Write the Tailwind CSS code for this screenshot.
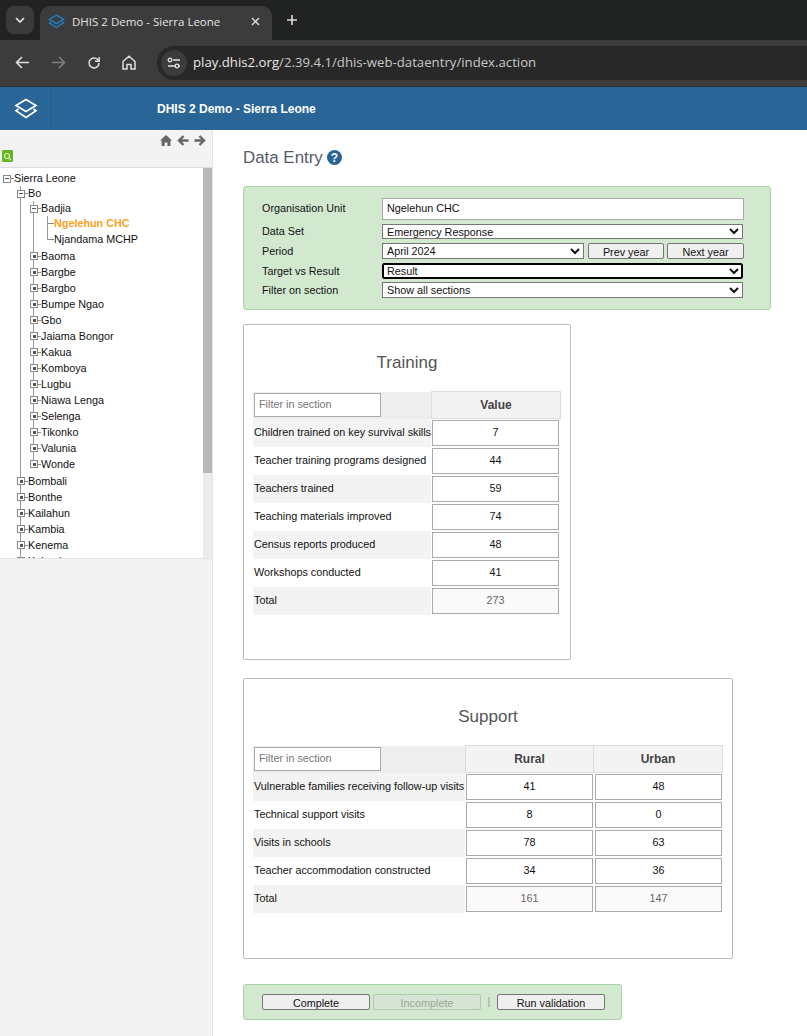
<!DOCTYPE html>
<html lang="en">
<head>
  <meta charset="UTF-8">
  <title>DHIS 2 Demo - Sierra Leone</title>
  <script src="https://cdn.jsdelivr.net/npm/@tailwindcss/browser@4"></script>
</head>
<body class="h-[1036px] w-[807px] overflow-hidden bg-white font-['Liberation_Sans',sans-serif] text-[10.8px] text-[#111]">
  <!-- Browser tab strip -->
  <div class="flex h-[40px] items-start bg-[#212322] pl-[6px] pt-[6px] font-['Open_Sans',sans-serif]">
    <div class="flex h-[28px] w-[28px] items-center justify-center rounded-[8px] bg-[#3a3a3a]">
      <svg width="10" height="6" viewBox="0 0 10 6" fill="none" stroke="#e6e6e6" stroke-width="1.7"><path d="M1 1l4 4 4-4"/></svg>
    </div>
    <div class="ml-[6px] flex h-[34px] w-[232px] items-center rounded-t-[10px] bg-[#3c3c3c] pb-[3px] pl-[8px] pr-[12px]">
      <svg width="17" height="15" viewBox="0 0 24 21" fill="none" stroke="#1f7fc4" stroke-width="2"><path d="M12 1.5L22 7.5 12 13.5 2 7.5z"/><path d="M4 11L2 12.5 12 19 22 12.5 20 11"/></svg>
      <span class="ml-[7px] text-[11.5px] whitespace-nowrap text-[#e3e3e3]">DHIS 2 Demo - Sierra Leone</span>
      <svg class="ml-auto" width="9" height="9" viewBox="0 0 9 9" stroke="#dcdcdc" stroke-width="1.4"><path d="M1 1l7 7M8 1L1 8"/></svg>
    </div>
    <svg class="ml-[14px] mt-[8px]" width="12" height="12" viewBox="0 0 12 12" stroke="#dcdcdc" stroke-width="1.6"><path d="M6 1v10M1 6h10"/></svg>
  </div>

  <!-- Browser toolbar -->
  <div class="flex h-[47px] items-center border-b border-[#2e3133] bg-[#3c3c3c] pb-[1px] font-['Open_Sans',sans-serif]">
    <div class="flex w-[157px] items-center pl-[15px]">
      <svg width="15" height="13" viewBox="0 0 15 13" fill="none" stroke="#dedede" stroke-width="1.6"><path d="M14 6.5H2M7 1L1.5 6.5 7 12"/></svg>
      <svg class="ml-[21px]" width="15" height="13" viewBox="0 0 15 13" fill="none" stroke="#808080" stroke-width="1.6"><path d="M1 6.5h12M8 1l5.5 5.5L8 12"/></svg>
      <svg class="ml-[21px]" width="14" height="14" viewBox="0 0 14 14" fill="none" stroke="#dedede" stroke-width="1.5"><path d="M12 7a5 5 0 1 1-1.5-3.6L12 5"/><path d="M12.2 1v4.2H8" /></svg>
      <svg class="ml-[21px]" width="14" height="15" viewBox="0 0 14 15" fill="none" stroke="#dedede" stroke-width="1.5"><path d="M1 6.5L7 1.2l6 5.3V14H9V9.5H5V14H1z"/></svg>
    </div>
    <div class="flex h-[34px] flex-1 items-center rounded-l-[17px] bg-[#282828] pl-[4px]">
      <div class="flex h-[26px] w-[26px] items-center justify-center rounded-full bg-[#3c3c3c]">
        <svg width="14" height="12" viewBox="0 0 14 12" fill="none" stroke="#e3e3e3" stroke-width="1.3"><path d="M6 3h7M1 9h7M11 9h2"/><circle cx="3" cy="3" r="1.8"/><circle cx="10" cy="9" r="1.8"/></svg>
      </div>
      <span class="ml-[6px] pt-[1px] text-[13.2px] whitespace-nowrap text-[#c7c7c7]"><span class="text-[#e8e8e8]">play.dhis2.org</span>/2.39.4.1/dhis-web-dataentry/index.action</span>
    </div>
  </div>

  <!-- DHIS2 header -->
  <header class="flex h-[43px] items-center bg-[#296596]">
    <div class="flex h-full w-[52px] items-center justify-center border-r border-[#245a86]">
      <svg width="24" height="21" viewBox="0 0 24 21" fill="none" stroke="#fff" stroke-width="1.7"><path d="M12 1.5L22 7.5 12 13.5 2 7.5z"/><path d="M4.5 11L2 12.8 12 19.5 22 12.8 19.5 11"/></svg>
    </div>
    <h1 class="ml-[105px] text-[12px] font-bold text-white">DHIS 2 Demo - Sierra Leone</h1>
  </header>

  <div class="flex h-[906px]">
    <!-- Organisation unit tree -->
    <aside class="flex h-full w-[213px] shrink-0 flex-col border-r border-[#e4e4e4] bg-[#f3f3f3]">
      <div class="h-[38px] shrink-0 border-b border-[#ddd]">
        <div class="flex h-[20px] items-center justify-end gap-[5px] pr-[6px]">
          <svg width="12" height="11" viewBox="0 0 12 11" fill="#666"><path d="M6 0L0 5.5h1.6V11h3V7.5h2.8V11h3V5.5H12z"/></svg>
          <svg width="12" height="11" viewBox="0 0 12 11" fill="none" stroke="#666" stroke-width="2.4"><path d="M11.5 5.5H2M6.5 1L2 5.5 6.5 10"/></svg>
          <svg width="12" height="11" viewBox="0 0 12 11" fill="none" stroke="#666" stroke-width="2.4"><path d="M.5 5.5H10M5.5 1L10 5.5 5.5 10"/></svg>
        </div>
        <div class="ml-[2px] flex h-[12px] w-[11px] items-center justify-center rounded-[1px] bg-[#66b61f]">
          <svg width="9" height="9" viewBox="0 0 9 9" fill="none" stroke="#d8f0b8" stroke-width="1.2"><circle cx="4" cy="4" r="2.5"/><path d="M6 6L8 8"/></svg>
        </div>
      </div>
      <div class="flex h-[390px] shrink-0 bg-white">
        <div class="h-full flex-1 overflow-hidden pt-[3px] leading-none">
          <div class="flex h-[15px] items-center pl-[3px]">
            <i class="flex h-[8px] w-[8px] shrink-0 items-center justify-center border border-[#888] bg-white"><b class="h-px w-[4px] bg-[#555]"></b></i><i class="h-px w-[3px] bg-[#888]"></i><span>Sierra Leone</span>
          </div>
          <ul class="ml-[20px] border-l border-[#999]">
            <li class="flex h-[15px] items-center">
              <i class="-ml-[4px] flex h-[8px] w-[8px] shrink-0 items-center justify-center border border-[#888] bg-white"><b class="h-px w-[4px] bg-[#555]"></b></i><i class="h-px w-[3px] bg-[#888]"></i><span>Bo</span>
            </li>
            <li>
              <ul class="mb-[8px] ml-[12px] h-[264px] border-l border-[#999]">
                <li class="flex h-[15px] items-center">
                  <i class="-ml-[4px] flex h-[8px] w-[8px] shrink-0 items-center justify-center border border-[#888] bg-white"><b class="h-px w-[4px] bg-[#555]"></b></i><i class="h-px w-[3px] bg-[#888]"></i><span>Badjia</span>
                </li>
                <li>
                  <ul class="mb-[8px] ml-[13px] h-[24px] border-l border-[#999]">
                    <li class="flex h-[15px] items-center"><i class="h-px w-[6px] bg-[#888]"></i><span class="font-bold text-[#ff9f1c]">Ngelehun CHC</span></li>
                    <li class="flex h-[16px] items-center"><i class="h-px w-[6px] bg-[#888]"></i><span>Njandama MCHP</span></li>
                  </ul>
                </li>
                <li class="flex h-[16px] items-center"><i class="-ml-[4px] flex h-[8px] w-[8px] shrink-0 items-center justify-center border border-[#888] bg-white"><b class="h-[3px] w-[3px] bg-[#555]"></b></i><i class="h-px w-[3px] bg-[#888]"></i><span>Baoma</span></li>
                <li class="flex h-[16px] items-center"><i class="-ml-[4px] flex h-[8px] w-[8px] shrink-0 items-center justify-center border border-[#888] bg-white"><b class="h-[3px] w-[3px] bg-[#555]"></b></i><i class="h-px w-[3px] bg-[#888]"></i><span>Bargbe</span></li>
                <li class="flex h-[16px] items-center"><i class="-ml-[4px] flex h-[8px] w-[8px] shrink-0 items-center justify-center border border-[#888] bg-white"><b class="h-[3px] w-[3px] bg-[#555]"></b></i><i class="h-px w-[3px] bg-[#888]"></i><span>Bargbo</span></li>
                <li class="flex h-[16px] items-center"><i class="-ml-[4px] flex h-[8px] w-[8px] shrink-0 items-center justify-center border border-[#888] bg-white"><b class="h-[3px] w-[3px] bg-[#555]"></b></i><i class="h-px w-[3px] bg-[#888]"></i><span>Bumpe Ngao</span></li>
                <li class="flex h-[16px] items-center"><i class="-ml-[4px] flex h-[8px] w-[8px] shrink-0 items-center justify-center border border-[#888] bg-white"><b class="h-[3px] w-[3px] bg-[#555]"></b></i><i class="h-px w-[3px] bg-[#888]"></i><span>Gbo</span></li>
                <li class="flex h-[16px] items-center"><i class="-ml-[4px] flex h-[8px] w-[8px] shrink-0 items-center justify-center border border-[#888] bg-white"><b class="h-[3px] w-[3px] bg-[#555]"></b></i><i class="h-px w-[3px] bg-[#888]"></i><span>Jaiama Bongor</span></li>
                <li class="flex h-[16px] items-center"><i class="-ml-[4px] flex h-[8px] w-[8px] shrink-0 items-center justify-center border border-[#888] bg-white"><b class="h-[3px] w-[3px] bg-[#555]"></b></i><i class="h-px w-[3px] bg-[#888]"></i><span>Kakua</span></li>
                <li class="flex h-[16px] items-center"><i class="-ml-[4px] flex h-[8px] w-[8px] shrink-0 items-center justify-center border border-[#888] bg-white"><b class="h-[3px] w-[3px] bg-[#555]"></b></i><i class="h-px w-[3px] bg-[#888]"></i><span>Komboya</span></li>
                <li class="flex h-[16px] items-center"><i class="-ml-[4px] flex h-[8px] w-[8px] shrink-0 items-center justify-center border border-[#888] bg-white"><b class="h-[3px] w-[3px] bg-[#555]"></b></i><i class="h-px w-[3px] bg-[#888]"></i><span>Lugbu</span></li>
                <li class="flex h-[16px] items-center"><i class="-ml-[4px] flex h-[8px] w-[8px] shrink-0 items-center justify-center border border-[#888] bg-white"><b class="h-[3px] w-[3px] bg-[#555]"></b></i><i class="h-px w-[3px] bg-[#888]"></i><span>Niawa Lenga</span></li>
                <li class="flex h-[16px] items-center"><i class="-ml-[4px] flex h-[8px] w-[8px] shrink-0 items-center justify-center border border-[#888] bg-white"><b class="h-[3px] w-[3px] bg-[#555]"></b></i><i class="h-px w-[3px] bg-[#888]"></i><span>Selenga</span></li>
                <li class="flex h-[16px] items-center"><i class="-ml-[4px] flex h-[8px] w-[8px] shrink-0 items-center justify-center border border-[#888] bg-white"><b class="h-[3px] w-[3px] bg-[#555]"></b></i><i class="h-px w-[3px] bg-[#888]"></i><span>Tikonko</span></li>
                <li class="flex h-[16px] items-center"><i class="-ml-[4px] flex h-[8px] w-[8px] shrink-0 items-center justify-center border border-[#888] bg-white"><b class="h-[3px] w-[3px] bg-[#555]"></b></i><i class="h-px w-[3px] bg-[#888]"></i><span>Valunia</span></li>
                <li class="flex h-[16px] items-center"><i class="-ml-[4px] flex h-[8px] w-[8px] shrink-0 items-center justify-center border border-[#888] bg-white"><b class="h-[3px] w-[3px] bg-[#555]"></b></i><i class="h-px w-[3px] bg-[#888]"></i><span>Wonde</span></li>
              </ul>
            </li>
            <li class="flex h-[16px] items-center"><i class="-ml-[4px] flex h-[8px] w-[8px] shrink-0 items-center justify-center border border-[#888] bg-white"><b class="h-[3px] w-[3px] bg-[#555]"></b></i><i class="h-px w-[3px] bg-[#888]"></i><span>Bombali</span></li>
            <li class="flex h-[16px] items-center"><i class="-ml-[4px] flex h-[8px] w-[8px] shrink-0 items-center justify-center border border-[#888] bg-white"><b class="h-[3px] w-[3px] bg-[#555]"></b></i><i class="h-px w-[3px] bg-[#888]"></i><span>Bonthe</span></li>
            <li class="flex h-[16px] items-center"><i class="-ml-[4px] flex h-[8px] w-[8px] shrink-0 items-center justify-center border border-[#888] bg-white"><b class="h-[3px] w-[3px] bg-[#555]"></b></i><i class="h-px w-[3px] bg-[#888]"></i><span>Kailahun</span></li>
            <li class="flex h-[16px] items-center"><i class="-ml-[4px] flex h-[8px] w-[8px] shrink-0 items-center justify-center border border-[#888] bg-white"><b class="h-[3px] w-[3px] bg-[#555]"></b></i><i class="h-px w-[3px] bg-[#888]"></i><span>Kambia</span></li>
            <li class="flex h-[16px] items-center"><i class="-ml-[4px] flex h-[8px] w-[8px] shrink-0 items-center justify-center border border-[#888] bg-white"><b class="h-[3px] w-[3px] bg-[#555]"></b></i><i class="h-px w-[3px] bg-[#888]"></i><span>Kenema</span></li>
            <li class="flex h-[16px] items-center"><i class="-ml-[4px] flex h-[8px] w-[8px] shrink-0 items-center justify-center border border-[#888] bg-white"><b class="h-[3px] w-[3px] bg-[#555]"></b></i><i class="h-px w-[3px] bg-[#888]"></i><span>Koinadugu</span></li>
          </ul>
        </div>
        <div class="h-full w-[9px] shrink-0 bg-[#ececec]"><div class="h-[305px] bg-[#b9b9b9]"></div></div>
      </div>
      <div class="flex-1 border-t border-[#e4e4e4]"></div>
    </aside>

    <!-- Data entry form -->
    <main class="flex-1 pl-[30px]">
      <div class="flex h-[56px] items-center">
        <h2 class="text-[16.9px] text-[#555b66]">Data Entry</h2>
        <span class="mb-[1px] ml-[4px] flex h-[15px] w-[15px] items-center justify-center rounded-full bg-[#286596] text-[12px] font-bold text-white">?</span>
      </div>

      <form class="h-[124px] w-[528px] rounded-[3px] border border-[#a9d4a5] bg-[#d2e9cf] pl-[18px] pt-[11px]">
        <div class="flex h-[22px] items-center">
          <label class="w-[120px] pb-[2px]">Organisation Unit</label>
          <input class="h-[22px] w-[362px] border border-[#aaa] bg-white px-[4px] pb-[2px]" value="Ngelehun CHC">
        </div>
        <div class="mt-[4px] flex h-[15px] items-center">
          <label class="w-[120px]">Data Set</label>
          <select class="h-[15px] w-[361px] border border-[#767676] bg-white"><option>Emergency Response</option></select>
        </div>
        <div class="mt-[4px] flex h-[16px] items-center">
          <label class="w-[120px]">Period</label>
          <select class="h-[16px] w-[202px] border border-[#767676] bg-white"><option>April 2024</option></select>
          <button type="button" class="ml-[4px] h-[16px] w-[76px] rounded-[2px] border border-[#767676] bg-[#efefef] pb-[2px]">Prev year</button>
          <button type="button" class="ml-[3px] h-[16px] w-[77px] rounded-[2px] border border-[#767676] bg-[#efefef] pb-[2px]">Next year</button>
        </div>
        <div class="mt-[4px] flex h-[16px] items-center">
          <label class="w-[120px]">Target vs Result</label>
          <select class="h-[16px] w-[361px] rounded-[2px] border border-black bg-white shadow-[inset_0_0_0_1px_#000]"><option>Result</option></select>
        </div>
        <div class="mt-[3px] flex h-[16px] items-center">
          <label class="w-[120px]">Filter on section</label>
          <select class="h-[16px] w-[361px] border border-[#767676] bg-white"><option>Show all sections</option></select>
        </div>
      </form>

      <!-- Training -->
      <section class="mt-[14px] h-[336px] w-[328px] rounded-[2px] border border-[#bbb] pl-[9px]">
        <h3 class="flex h-[66px] items-end justify-center pb-[16px] pr-[9px] text-[17px] text-[#555]">Training</h3>
        <table class="w-[307px] table-fixed border-collapse">
          <colgroup><col class="w-[178px]"><col class="w-[129px]"></colgroup>
          <tr class="h-[27px]">
            <td class="bg-[#eee] pl-[1px]"><input class="block h-[24px] w-[127px] border border-[#aaa] bg-white px-[4px] pb-[3px] placeholder:text-[#777]" placeholder="Filter in section"></td>
            <th class="border border-[#ddd] bg-[#f3f3f3] pl-[1px] text-[12px] font-bold text-[#444]">Value</th>
          </tr>
          <tr class="h-[28px] bg-[#f3f3f3]"><td class="whitespace-nowrap pb-[1px] pl-[1px]">Children trained on key survival skills</td><td class="bg-white pl-[1px]"><input class="block h-[26px] w-[127px] border border-[#aaa] bg-white pb-[2px] text-center" value="7"></td></tr>
          <tr class="h-[28px]"><td class="whitespace-nowrap pb-[1px] pl-[1px]">Teacher training programs designed</td><td class="bg-white pl-[1px]"><input class="block h-[26px] w-[127px] border border-[#aaa] bg-white pb-[2px] text-center" value="44"></td></tr>
          <tr class="h-[28px] bg-[#f3f3f3]"><td class="whitespace-nowrap pb-[1px] pl-[1px]">Teachers trained</td><td class="bg-white pl-[1px]"><input class="block h-[26px] w-[127px] border border-[#aaa] bg-white pb-[2px] text-center" value="59"></td></tr>
          <tr class="h-[28px]"><td class="whitespace-nowrap pb-[1px] pl-[1px]">Teaching materials improved</td><td class="bg-white pl-[1px]"><input class="block h-[26px] w-[127px] border border-[#aaa] bg-white pb-[2px] text-center" value="74"></td></tr>
          <tr class="h-[28px] bg-[#f3f3f3]"><td class="whitespace-nowrap pb-[1px] pl-[1px]">Census reports produced</td><td class="bg-white pl-[1px]"><input class="block h-[26px] w-[127px] border border-[#aaa] bg-white pb-[2px] text-center" value="48"></td></tr>
          <tr class="h-[28px]"><td class="whitespace-nowrap pb-[1px] pl-[1px]">Workshops conducted</td><td class="bg-white pl-[1px]"><input class="block h-[26px] w-[127px] border border-[#aaa] bg-white pb-[2px] text-center" value="41"></td></tr>
          <tr class="h-[28px] bg-[#f3f3f3]"><td class="whitespace-nowrap pb-[1px] pl-[1px]">Total</td><td class="bg-white pl-[1px]"><input class="block h-[26px] w-[127px] border border-[#aaa] bg-[#fafafa] pb-[2px] text-center text-[#666]" value="273"></td></tr>
        </table>
      </section>

      <!-- Support -->
      <section class="mt-[18px] h-[281px] w-[490px] rounded-[2px] border border-[#bbb] pl-[9px]">
        <h3 class="flex h-[66px] w-[470px] items-end justify-center pb-[16px] text-[17px] text-[#555]">Support</h3>
        <table class="w-[469px] table-fixed border-collapse">
          <colgroup><col class="w-[212px]"><col class="w-[128px]"><col class="w-[129px]"></colgroup>
          <tr class="h-[27px]">
            <td class="bg-[#eee] pl-[1px]"><input class="block h-[24px] w-[127px] border border-[#aaa] bg-white px-[4px] pb-[3px] placeholder:text-[#777]" placeholder="Filter in section"></td>
            <th class="border border-[#ddd] bg-[#f3f3f3] pl-[1px] text-[12px] font-bold text-[#444]">Rural</th>
            <th class="border border-[#ddd] bg-[#f3f3f3] pl-[1px] text-[12px] font-bold text-[#444]">Urban</th>
          </tr>
          <tr class="h-[28px] bg-[#f3f3f3]"><td class="whitespace-nowrap pb-[1px] pl-[1px]">Vulnerable families receiving follow-up visits</td><td class="bg-white pl-[1px]"><input class="block h-[26px] w-[127px] border border-[#aaa] bg-white pb-[2px] text-center" value="41"></td><td class="bg-white pl-[2px]"><input class="block h-[26px] w-[127px] border border-[#aaa] bg-white pb-[2px] text-center" value="48"></td></tr>
          <tr class="h-[28px]"><td class="whitespace-nowrap pb-[1px] pl-[1px]">Technical support visits</td><td class="bg-white pl-[1px]"><input class="block h-[26px] w-[127px] border border-[#aaa] bg-white pb-[2px] text-center" value="8"></td><td class="bg-white pl-[2px]"><input class="block h-[26px] w-[127px] border border-[#aaa] bg-white pb-[2px] text-center" value="0"></td></tr>
          <tr class="h-[28px] bg-[#f3f3f3]"><td class="whitespace-nowrap pb-[1px] pl-[1px]">Visits in schools</td><td class="bg-white pl-[1px]"><input class="block h-[26px] w-[127px] border border-[#aaa] bg-white pb-[2px] text-center" value="78"></td><td class="bg-white pl-[2px]"><input class="block h-[26px] w-[127px] border border-[#aaa] bg-white pb-[2px] text-center" value="63"></td></tr>
          <tr class="h-[28px]"><td class="whitespace-nowrap pb-[1px] pl-[1px]">Teacher accommodation constructed</td><td class="bg-white pl-[1px]"><input class="block h-[26px] w-[127px] border border-[#aaa] bg-white pb-[2px] text-center" value="34"></td><td class="bg-white pl-[2px]"><input class="block h-[26px] w-[127px] border border-[#aaa] bg-white pb-[2px] text-center" value="36"></td></tr>
          <tr class="h-[28px] bg-[#f3f3f3]"><td class="whitespace-nowrap pb-[1px] pl-[1px]">Total</td><td class="bg-white pl-[1px]"><input class="block h-[26px] w-[127px] border border-[#aaa] bg-[#fafafa] pb-[2px] text-center text-[#666]" value="161"></td><td class="bg-white pl-[2px]"><input class="block h-[26px] w-[127px] border border-[#aaa] bg-[#fafafa] pb-[2px] text-center text-[#666]" value="147"></td></tr>
        </table>
      </section>

      <!-- Completion buttons -->
      <div class="mt-[25px] flex h-[36px] w-[379px] items-center rounded-[3px] border border-[#a9d4a5] bg-[#d2e9cf] pl-[18px]">
        <button type="button" class="h-[16px] w-[108px] rounded-[2px] border border-[#767676] bg-[#efefef] pb-[2px]">Complete</button>
        <button type="button" disabled class="ml-[3px] h-[16px] w-[108px] rounded-[2px] border border-[#b4c9b2] bg-[#d5e4d3] pb-[2px] text-[#9aa89a]">Incomplete</button>
        <i class="ml-[7px] h-[10px] w-[2px] bg-[#b4c4b2]"></i>
        <button type="button" class="ml-[7px] h-[16px] w-[108px] rounded-[2px] border border-[#767676] bg-[#efefef] pb-[2px]">Run validation</button>
      </div>
    </main>
  </div>
</body>
</html>
